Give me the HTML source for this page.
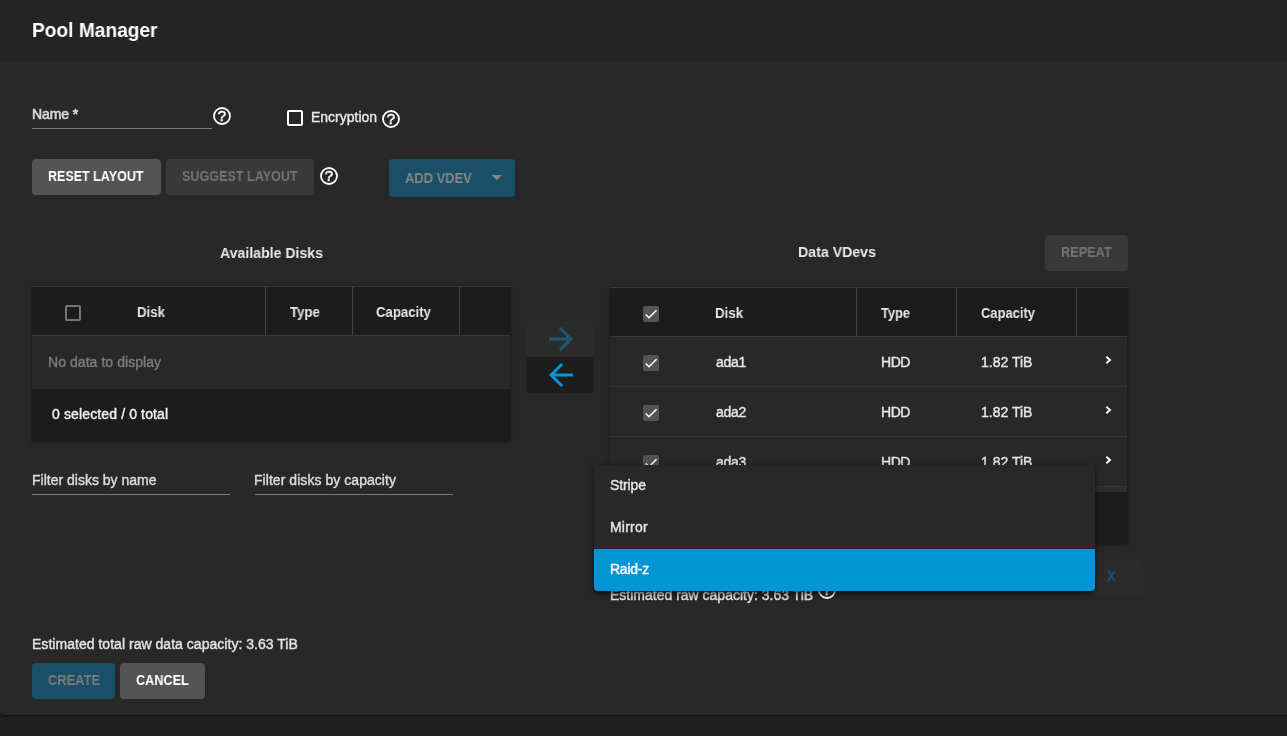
<!DOCTYPE html>
<html lang="en">
<head>
<meta charset="utf-8">
<title>Pool Manager</title>
<style>
*{box-sizing:border-box;margin:0;padding:0}
html,body{width:1287px;height:736px;overflow:hidden;background:#1e1e1e}
body{position:relative;font-family:"Liberation Sans",Arial,sans-serif;font-size:14px;color:#e6e6e6;line-height:1}
.abs,.t{position:absolute}
.t{white-space:nowrap;transform-origin:0 50%;will-change:transform;line-height:16px;height:16px}
.b{font-weight:bold}
.t:not(.b){-webkit-text-stroke:.4px}
.card{position:absolute;left:0;top:0;width:1300px;height:715px;background:#282828;border-radius:4px;box-shadow:0 2px 1px -1px rgba(0,0,0,.2),0 1px 1px 0 rgba(0,0,0,.14),0 1px 3px 0 rgba(0,0,0,.12)}
.hdr{position:absolute;left:0;top:0;width:1300px;height:62px;background:#242424;border-radius:4px 4px 0 0}
.btn{position:absolute;border-radius:4px;height:36px}
.line{position:absolute;height:1px;background:#7a7a7a}
.help{position:absolute;width:18px;height:18px;will-change:transform}
.cb{position:absolute;width:16px;height:16px;border-radius:2px}
.cb.on{background:#545454}
.tbl{position:absolute;background:#282828;box-shadow:0 2px 4px rgba(0,0,0,.4),0 0 2px rgba(0,0,0,.3)}
.th{position:absolute;left:0;background:#1c1c1c}
.vd{position:absolute;width:1px;background:#444}
.hl{position:absolute;left:0;height:1px;background:#383838}
.rl{background:#343434}
.menu{position:absolute;left:594px;top:465px;width:501px;height:126px;background:#282828;border-radius:4px;overflow:hidden}
.menuwrap{position:absolute;left:594px;top:465px;width:501px;height:126px;border-radius:4px;box-shadow:0 2px 4px -1px rgba(0,0,0,.4),0 4px 5px 0 rgba(0,0,0,.28),0 1px 10px 0 rgba(0,0,0,.24)}
.mi{position:absolute;left:0;width:501px;height:42px}
</style>
</head>
<body>
<div class="card">
  <div class="hdr"></div>
  <h3 id="t_title" class="t b" style="left:32px;top:18px;font-size:20px;line-height:24px;height:24px;color:#fff;transform:scaleX(.957)">Pool Manager</h3>

  <!-- name field -->
  <label id="t_name" class="t" style="left:32px;top:106px;color:#d6d6d6;letter-spacing:-0.1px;-webkit-text-stroke:.65px">Name *</label>
  <div class="line" style="left:32px;top:128px;width:180px"></div>
  <svg class="help" style="left:213px;top:107px" viewBox="0 0 18 18"><circle cx="9" cy="9" r="8" fill="none" stroke="#fff" stroke-width="1.8"/><text x="9" y="14.2" text-anchor="middle" font-family="Liberation Sans,sans-serif" font-size="15" fill="#fff" stroke="#fff" stroke-width=".55">?</text></svg>

  <!-- encryption -->
  <div class="cb" style="left:287px;top:110px;border:2px solid #fff"></div>
  <span id="t_enc" class="t" style="left:311px;top:109px">Encryption</span>
  <svg class="help" style="left:382px;top:110px" viewBox="0 0 18 18"><circle cx="9" cy="9" r="8" fill="none" stroke="#fff" stroke-width="1.8"/><text x="9" y="14.2" text-anchor="middle" font-family="Liberation Sans,sans-serif" font-size="15" fill="#fff" stroke="#fff" stroke-width=".55">?</text></svg>

  <!-- buttons row -->
  <div class="btn" style="left:32px;top:159px;width:129px;background:#545454"></div>
  <span id="t_reset" class="t b" style="left:48px;top:168px;color:#fff;transform:scaleX(.894)">RESET LAYOUT</span>
  <div class="btn" style="left:166px;top:159px;width:148px;background:#393939"></div>
  <span id="t_suggest" class="t b" style="left:182px;top:168px;color:#757575;transform:scaleX(.899)">SUGGEST LAYOUT</span>
  <svg class="help" style="left:320px;top:167px" viewBox="0 0 18 18"><circle cx="9" cy="9" r="8" fill="none" stroke="#fff" stroke-width="1.8"/><text x="9" y="14.2" text-anchor="middle" font-family="Liberation Sans,sans-serif" font-size="15" fill="#fff" stroke="#fff" stroke-width=".55">?</text></svg>
  <div class="btn" style="left:389px;top:159px;width:126px;height:38px;background:#1a4f68"></div>
  <span id="t_addvdev" class="t b" style="left:405px;top:170px;color:#868686;transform:scaleX(.922)">ADD VDEV</span>
  <svg class="abs" style="left:491px;top:175px" width="12" height="6" viewBox="0 0 12 6"><path d="M0.5 0h10.6L5.8 5.3z" fill="#868686"/></svg>

  <!-- available disks -->
  <span id="t_avail" class="t b" style="left:220px;top:244px;font-size:15px;line-height:18px;height:18px;color:#e8e8e8;transform:scaleX(.94)">Available Disks</span>
  <div class="tbl" style="left:32px;top:286px;width:478px;height:154px">
    <div class="hl" style="top:0;width:478px"></div>
    <div class="th" style="top:1px;width:478px;height:48px"></div>
    <div class="vd" style="left:233px;top:1px;height:48px"></div>
    <div class="vd" style="left:320px;top:1px;height:48px"></div>
    <div class="vd" style="left:427px;top:1px;height:48px"></div>
    <div class="hl" style="top:49px;width:478px"></div>
    <div class="cb" style="left:33px;top:19px;border:2px solid #757575"></div>
    <span id="t_ldisk" class="t b" style="left:105px;top:18px;transform:scaleX(.945)">Disk</span>
    <span id="t_ltype" class="t b" style="left:257.6px;top:18px;transform:scaleX(.945)">Type</span>
    <span id="t_lcap" class="t b" style="left:344px;top:18px;transform:scaleX(.94)">Capacity</span>
    <span id="t_nodata" class="t" style="left:16px;top:68px;color:#7b7b7b;letter-spacing:0.06px">No data to display</span>
    <div class="th" style="top:103px;width:478px;height:51px"></div>
    <span id="t_sel" class="t" style="left:20px;top:120px;color:#f0f0f0;letter-spacing:0.13px">0 selected / 0 total</span>
  </div>
  <span id="t_fname" class="t" style="left:32px;top:472px;color:#dcdcdc">Filter disks by name</span>
  <div class="line" style="left:32px;top:494px;width:198px"></div>
  <span id="t_fcap" class="t" style="left:254px;top:472px;color:#dcdcdc;letter-spacing:0.05px">Filter disks by capacity</span>
  <div class="line" style="left:255px;top:494px;width:198px"></div>

  <!-- move buttons -->
  <div class="btn" style="left:526px;top:321px;width:68px;height:35px;background:#2b2b2b"></div>
  <svg class="abs" style="left:542.5px;top:321px" width="36" height="36" viewBox="0 0 24 24"><path d="M12 4l-1.41 1.41L16.17 11H4v2h12.17l-5.58 5.59L12 20l8-8z" fill="#1b5877"/></svg>
  <div class="btn" style="left:526px;top:357px;width:68px;background:#1d1d1d"></div>
  <svg class="abs" style="left:542.5px;top:357px" width="36" height="36" viewBox="0 0 24 24"><path d="M20 11H7.83l5.59-5.59L12 4l-8 8 8 8 1.41-1.41L7.83 13H20v-2z" fill="#0095d5"/></svg>

  <!-- data vdevs -->
  <span id="t_data" class="t b" style="left:798px;top:243px;font-size:15px;line-height:18px;height:18px;color:#e8e8e8;transform:scaleX(.944)">Data VDevs</span>
  <div class="btn" style="left:1045px;top:235px;width:83px;background:#393939"></div>
  <span id="t_repeat" class="t b" style="left:1061px;top:244px;color:#757575;transform:scaleX(.91)">REPEAT</span>

  <div class="tbl" style="left:610px;top:287px;width:517px;height:256px">
    <div class="hl" style="top:0;width:517px"></div>
    <div class="th" style="top:1px;width:517px;height:48px"></div>
    <div class="vd" style="left:246px;top:1px;height:48px"></div>
    <div class="vd" style="left:346px;top:1px;height:48px"></div>
    <div class="vd" style="left:466px;top:1px;height:48px"></div>
    <div class="hl" style="top:49px;width:517px"></div>
    <div class="cb on" style="left:33px;top:19px"><svg width="16" height="16" viewBox="0 0 16 16"><path d="M2.73 8.47L6 11.73 13.53 4.2" fill="none" stroke="#fff" stroke-width="1.6"/></svg></div>
    <span id="t_rdisk" class="t b" style="left:105px;top:18px;transform:scaleX(.95)">Disk</span>
    <span id="t_rtype" class="t b" style="left:271px;top:18px;transform:scaleX(.92)">Type</span>
    <span id="t_rcap" class="t b" style="left:371px;top:18px;transform:scaleX(.924)">Capacity</span>

    <div class="cb on" style="left:33px;top:68px"><svg width="16" height="16" viewBox="0 0 16 16"><path d="M2.73 8.47L6 11.73 13.53 4.2" fill="none" stroke="#fff" stroke-width="1.6"/></svg></div>
    <span id="t_ada1" class="t" style="left:106px;top:67px;letter-spacing:-0.3px">ada1</span>
    <span id="t_hdd1" class="t" style="left:271px;top:67px;letter-spacing:-0.45px">HDD</span>
    <span id="t_cap1" class="t" style="left:371px;top:67px">1.82 TiB</span>
    <svg class="abs" style="left:495px;top:68px" width="8" height="10" viewBox="0 0 8 10"><path d="M1.3 1.7L5 5 1.3 8.3" fill="none" stroke="#fff" stroke-width="2"/></svg>
    <div class="hl rl" style="top:99px;width:517px"></div>

    <div class="cb on" style="left:33px;top:118px"><svg width="16" height="16" viewBox="0 0 16 16"><path d="M2.73 8.47L6 11.73 13.53 4.2" fill="none" stroke="#fff" stroke-width="1.6"/></svg></div>
    <span id="t_ada2" class="t" style="left:106px;top:117px;letter-spacing:-0.3px">ada2</span>
    <span id="t_hdd2" class="t" style="left:271px;top:117px;letter-spacing:-0.45px">HDD</span>
    <span id="t_cap2" class="t" style="left:371px;top:117px">1.82 TiB</span>
    <svg class="abs" style="left:495px;top:118px" width="8" height="10" viewBox="0 0 8 10"><path d="M1.3 1.7L5 5 1.3 8.3" fill="none" stroke="#fff" stroke-width="2"/></svg>
    <div class="hl rl" style="top:149px;width:517px"></div>

    <div class="cb on" style="left:33px;top:168px"><svg width="16" height="16" viewBox="0 0 16 16"><path d="M2.73 8.47L6 11.73 13.53 4.2" fill="none" stroke="#fff" stroke-width="1.6"/></svg></div>
    <span id="t_ada3" class="t" style="left:106px;top:167px;letter-spacing:-0.3px">ada3</span>
    <span id="t_hdd3" class="t" style="left:271px;top:167px;letter-spacing:-0.45px">HDD</span>
    <span id="t_cap3" class="t" style="left:371px;top:167px">1.82 TiB</span>
    <svg class="abs" style="left:495px;top:168px" width="8" height="10" viewBox="0 0 8 10"><path d="M1.3 1.7L5 5 1.3 8.3" fill="none" stroke="#fff" stroke-width="2"/></svg>
    <div class="hl rl" style="top:199px;width:517px"></div>
    <div class="abs" style="left:0;top:200px;width:517px;height:5px;background:#2c2c2c"></div>
    <div class="th" style="top:205px;width:517px;height:51px"></div>
  </div>

  <!-- vdev type row (mostly hidden behind the open menu) -->
  <div class="btn" style="left:1079px;top:559px;width:64px;background:#2b2b2b"></div>
  <span id="t_x" class="t b" style="left:1107px;top:568px;color:#1c5775;transform:scaleX(.92)">X</span>
  <span id="t_est" class="t" style="left:610.3px;top:587px;color:#e2e2e2;letter-spacing:0">Estimated raw capacity: 3.63 TiB</span>
  <svg class="help" style="left:818px;top:581px" viewBox="0 0 18 18"><circle cx="9" cy="9" r="8" fill="none" stroke="#fff" stroke-width="1.8"/><text x="9" y="14.2" text-anchor="middle" font-family="Liberation Sans,sans-serif" font-size="15" fill="#fff" stroke="#fff" stroke-width=".55">?</text></svg>

  <!-- open select menu -->
  <div class="menuwrap"></div>
  <div class="menu">
    <div class="mi" style="top:0"></div>
    <div class="mi" style="top:42px"></div>
    <div class="mi" style="top:84px;background:#0095d5"></div>
    <span id="t_stripe" class="t" style="left:16px;top:12px;letter-spacing:-0.1px">Stripe</span>
    <span id="t_mirror" class="t" style="left:16px;top:54px;letter-spacing:0.2px">Mirror</span>
    <span id="t_raidz" class="t" style="left:16px;top:96px;color:#fff;letter-spacing:-0.25px">Raid-z</span>
  </div>

  <!-- footer -->
  <span id="t_total" class="t" style="left:32px;top:636px;color:#e2e2e2;letter-spacing:0.03px">Estimated total raw data capacity: 3.63 TiB</span>
  <div class="btn" style="left:32px;top:663px;width:83px;background:#1a4f68"></div>
  <span id="t_create" class="t b" style="left:48px;top:672px;color:#7c7c7c;transform:scaleX(.92)">CREATE</span>
  <div class="btn" style="left:120px;top:663px;width:85px;background:#545454"></div>
  <span id="t_cancel" class="t b" style="left:136px;top:672px;color:#fff;transform:scaleX(.905)">CANCEL</span>
</div>
</body>
</html>
